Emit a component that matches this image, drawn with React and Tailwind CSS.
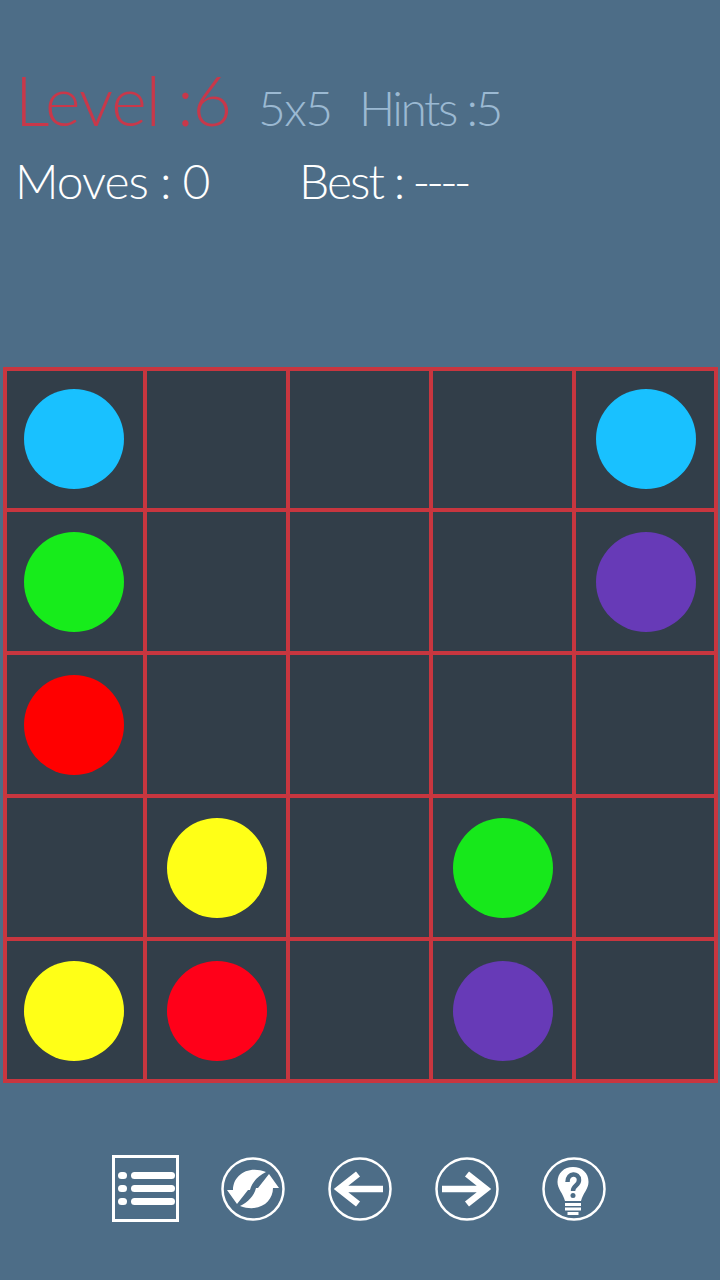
const FONT = "font-['Lato','Noto_Sans',sans-serif]";

// null = empty cell
const board = [
  ['bg-[#19c1ff]', null, null, null, 'bg-[#19c1ff]'],
  ['bg-[#17ec1b]', null, null, null, 'bg-[#673ab7]'],
  ['bg-[#ff0000]', null, null, null, null],
  [null, 'bg-[#ffff17]', null, 'bg-[#17e81b]', null],
  ['bg-[#ffff17]', 'bg-[#ff0019]', null, 'bg-[#673ab7]', null],
];

function CircleIcon({ children }) {
  return (
    <svg width="64" height="64" viewBox="0 0 64 64" fill="none">
      <circle cx="32" cy="32" r="30.5" stroke="white" strokeWidth="2.5" />
      {children}
    </svg>
  );
}

function ListIcon() {
  return (
    <div className="w-[67px] h-[67px] mr-[-1px] border-[3px] border-white flex flex-col justify-center gap-[6px] pl-[3px] pr-[1px]">
      {[0, 1, 2].map((i) => (
        <div key={i} className="flex gap-[4px] h-[7px]">
          <div className="w-[9px] rounded-full bg-white" />
          <div className="w-[44px] rounded-full bg-white" />
        </div>
      ))}
    </div>
  );
}

const REFRESH_ARROW = 'M6 33 L12 33 C12 19 26 8 45 15 C37 19 31 25 29 33 L27 33 L16 47 Z';

export default function App() {
  return (
    <div className={`w-[720px] h-[1280px] bg-[#4d6d87] overflow-hidden flex flex-col ${FONT}`}>
      {/* header */}
      <div className="h-[367px] pt-[62px] font-light">
        <div className="flex items-baseline pl-[15px] h-[76px]">
          <span className="w-[243px] text-[68px] leading-[76px] tracking-[-1px] text-[#c8384a]">Level :6</span>
          <span className="w-[101px] text-[48px] leading-[76px] tracking-[-1.5px] text-[#9bb9d2]">5x5</span>
          <span className="text-[48px] leading-[76px] tracking-[-2.5px] text-[#9bb9d2]">Hints :5</span>
        </div>
        <div className="flex items-baseline pl-[15px] mt-[13px]">
          <span className="w-[284px] text-[48px] leading-[60px] tracking-[-1px] text-white">Moves : 0</span>
          <span className="text-[48px] leading-[60px] tracking-[-2px] text-white">Best :<span className="ml-[9px] tracking-[-4px]">----</span></span>
        </div>
      </div>

      {/* board */}
      <div className="ml-[3px] w-[715px] h-[716px] p-[4px] bg-[#c8363f] grid grid-cols-[136px_139px_139px_139px_138px] grid-rows-[137px_139px_139px_139px_138px] gap-[4px]">
        {board.flat().map((color, i) => (
          <div key={i} className={`bg-[#323e49] flex items-center justify-center ${i % 5 === 0 ? 'pr-[3px]' : ''} ${i % 5 === 4 ? 'pl-[1px]' : ''} ${i < 5 ? 'pb-[2px]' : ''} ${i >= 20 ? 'pt-[1px]' : ''}`}>
            {color && <div className={`w-[100px] h-[100px] rounded-full ${color}`} />}
          </div>
        ))}
      </div>

      {/* toolbar */}
      <div className="flex items-center pl-[112px] mt-[72px] gap-[43px]">
        <ListIcon />
        <CircleIcon>
          <path d={REFRESH_ARROW} fill="white" />
          <path d={REFRESH_ARROW} fill="white" transform="rotate(180 32 32)" />
        </CircleIcon>
        <CircleIcon>
          <path d="M55 32 L11 32 M30 17 L11 32 L30 47" stroke="white" strokeWidth="6.5" />
        </CircleIcon>
        <CircleIcon>
          <path d="M7 32 L51 32 M32 17 L51 32 L32 47" stroke="white" strokeWidth="6.5" />
        </CircleIcon>
        <CircleIcon>
          <path d="M31 10 C40 10 46.5 16 46.5 25 C46.5 32 41 36 39 44 L23 44 C21 36 15.5 32 15.5 25 C15.5 16 22 10 31 10 Z" fill="white" />
          <path d="M25.5 25 C25.5 15 37 15.5 37 23 C37 29 31 28 31 34" stroke="#4d6d87" strokeWidth="4.5" />
          <circle cx="31" cy="38.5" r="2.5" fill="#4d6d87" />
          <path d="M23 47.5 L39 47.5 M23 52 L39 52 M25.5 56.5 L36.5 56.5" stroke="white" strokeWidth="2.8" />
        </CircleIcon>
      </div>
    </div>
  );
}
